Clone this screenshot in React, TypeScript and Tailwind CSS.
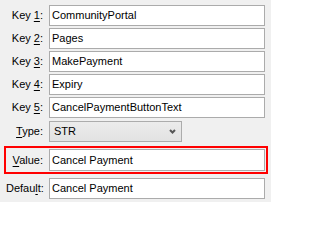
const keys = [
  { n: '1', value: 'CommunityPortal' },
  { n: '2', value: 'Pages' },
  { n: '3', value: 'MakePayment' },
  { n: '4', value: 'Expiry' },
  { n: '5', value: 'CancelPaymentButtonText' },
]

function Label({ children }: { children: React.ReactNode }) {
  return <div className="w-[37px] shrink-0 text-right whitespace-nowrap">{children}</div>
}

function TextBox({ value, tall }: { value: string; tall?: boolean }) {
  return (
    <div
      className={`ml-[6px] flex-1 flex items-center bg-white border border-[#ababab] pl-[2px] ${
        tall ? 'h-[22px]' : 'h-[21px]'
      }`}
    >
      {value}
    </div>
  )
}

export default function App() {
  return (
    <div
      className="w-[271px] h-[202px] bg-[#f0f0f0] px-[6px] pt-[5px] text-[11px] text-black leading-none"
      style={{ fontFamily: '"Liberation Sans", Arial, sans-serif' }}
    >
      <div className="flex flex-col gap-[2px]">
        {keys.map((k) => (
          <div key={k.n} className="flex items-center">
            <Label>
              Key <u className="underline-offset-2">{k.n}</u>:
            </Label>
            <TextBox value={k.value} />
          </div>
        ))}
      </div>

      {/* Type dropdown */}
      <div className="flex items-center mt-[3px]">
        <Label>
          <u className="underline-offset-2">T</u>ype:
        </Label>
        <div className="ml-[6px] w-[133px] h-[21px] flex items-center justify-between border border-[#acacac] bg-gradient-to-b from-[#ececec] to-[#e2e2e2] pl-[4px] pr-[5px]">
          <span>STR</span>
          <svg width="7" height="5" viewBox="0 0 7 5">
            <polyline points="1,1 3.5,3.5 6,1" fill="none" stroke="#555" strokeWidth="2" />
          </svg>
        </div>
      </div>

      {/* Highlighted value */}
      <div className="flex items-center mt-[4px] -ml-[2px] -mr-[3px] border-2 border-[#ff0000] py-px pr-px">
        <Label>
          <u className="underline-offset-2">V</u>alue:
        </Label>
        <TextBox value="Cancel Payment" tall />
      </div>

      <div className="flex items-center mt-[4px]">
        <Label>
          Defau<u className="underline-offset-2">l</u>t:
        </Label>
        <TextBox value="Cancel Payment" />
      </div>
    </div>
  )
}
